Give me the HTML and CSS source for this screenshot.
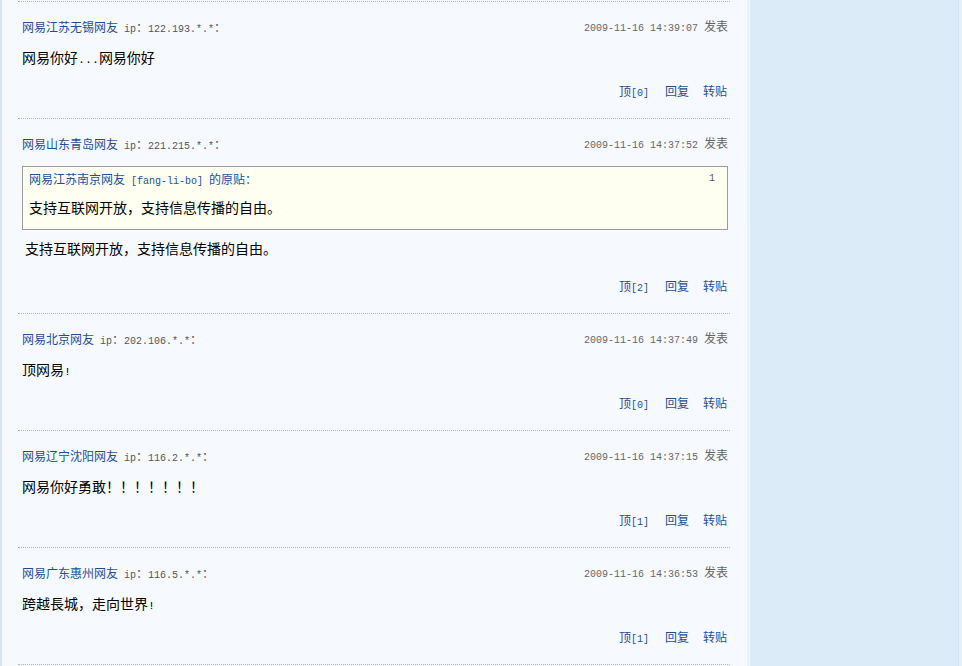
FILE: index.html
```html
<!DOCTYPE html>
<html lang="zh-CN">
<head>
<meta charset="utf-8">
<title>评论</title>
<link rel="stylesheet" href="styles.css">
</head>
<body>
<div class="page">
  <div class="main">
    <div class="comment">
      <div class="head">
        <div class="who"><a class="name">网易江苏无锡网友</a><span class="ip"><span class="mono"> ip</span>：<span class="mono">122.193.*.*</span>：</span></div>
        <div class="time"><span class="mono">2009-11-16 14:39:07 </span>发表</div>
      </div>
      <div class="text">网易你好<span class="mono14">...</span>网易你好</div>
      <div class="acts"><a><span>顶</span><span class="mono">[0]</span></a><a>回复</a><a>转贴</a></div>
    </div>
    <div class="comment">
      <div class="head">
        <div class="who"><a class="name">网易山东青岛网友</a><span class="ip"><span class="mono"> ip</span>：<span class="mono">221.215.*.*</span>：</span></div>
        <div class="time"><span class="mono">2009-11-16 14:37:52 </span>发表</div>
      </div>
      <div class="quote">
        <div class="qhead"><span class="qwho">网易江苏南京网友<span class="mono"> [fang-li-bo] </span>的原贴：</span><span class="qnum mono">1</span></div>
        <div class="qtext">支持互联网开放，支持信息传播的自由。</div>
      </div>
      <div class="text text-after">支持互联网开放，支持信息传播的自由。</div>
      <div class="acts acts-after"><a><span>顶</span><span class="mono">[2]</span></a><a>回复</a><a>转贴</a></div>
    </div>
    <div class="comment">
      <div class="head">
        <div class="who"><a class="name">网易北京网友</a><span class="ip"><span class="mono"> ip</span>：<span class="mono">202.106.*.*</span>：</span></div>
        <div class="time"><span class="mono">2009-11-16 14:37:49 </span>发表</div>
      </div>
      <div class="text">顶网易<span class="mono14">!</span></div>
      <div class="acts"><a><span>顶</span><span class="mono">[0]</span></a><a>回复</a><a>转贴</a></div>
    </div>
    <div class="comment">
      <div class="head">
        <div class="who"><a class="name">网易辽宁沈阳网友</a><span class="ip"><span class="mono"> ip</span>：<span class="mono">116.2.*.*</span>：</span></div>
        <div class="time"><span class="mono">2009-11-16 14:37:15 </span>发表</div>
      </div>
      <div class="text">网易你好勇敢！！！！！！！</div>
      <div class="acts"><a><span>顶</span><span class="mono">[1]</span></a><a>回复</a><a>转贴</a></div>
    </div>
    <div class="comment">
      <div class="head">
        <div class="who"><a class="name">网易广东惠州网友</a><span class="ip"><span class="mono"> ip</span>：<span class="mono">116.5.*.*</span>：</span></div>
        <div class="time"><span class="mono">2009-11-16 14:36:53 </span>发表</div>
      </div>
      <div class="text">跨越長城，走向世界<span class="mono14">!</span></div>
      <div class="acts"><a><span>顶</span><span class="mono">[1]</span></a><a>回复</a><a>转贴</a></div>
    </div>
    <div class="comment comment-last"></div>
  </div>
  <div class="side"></div>
  <div class="edge"></div>
</div>
</body>
</html>
```
FILE: styles.css
```css
html, body {
  margin: 0;
  padding: 0;
  background: #ffffff;
}
body {
  font-family: "Noto Sans CJK SC", "Noto Sans", sans-serif;
  font-size: 12px;
  color: #000;
}
.page {
  display: flex;
  width: 962px;
  height: 666px;
  overflow: hidden;
}
.main {
  flex: 0 0 750px;
  padding: 1px 0 0 16px;
  background: #f6faff;
  border-left: 2px solid #d6e4f2;
  border-right: 3px solid #eaf2fb;
  box-sizing: border-box;
}
.side {
  flex: 0 0 208px;
  background: #dcebf8;
}
.edge {
  flex: 0 0 4px;
  background: #e6f0fa;
  border-left: 1px solid #d2e2f2;
  box-sizing: border-box;
}
.comment {
  width: 712px;
  border-top: 1px dotted #b4b4b4;
  padding: 0 2px 19px 4px;
  box-sizing: border-box;
}
.comment-last {
  height: 10px;
  padding: 0;
}
.mono {
  font-family: "Liberation Mono", "DejaVu Sans Mono", monospace;
  font-size: 10px;
  white-space: pre;
}
.mono14 {
  font-family: "Liberation Mono", "DejaVu Sans Mono", monospace;
  font-size: 11.6px;
}
.head {
  display: flex;
  justify-content: space-between;
  align-items: center;
  padding-top: 17px;
  height: 16px;
  line-height: 16px;
}
.who, .time {
  height: 16px;
  line-height: 16px;
  white-space: nowrap;
}
.time {
  color: #666;
  position: relative;
  top: -1px;
}
a {
  color: #1c4e9e;
  text-decoration: none;
}
.ip {
  color: #555;
  font-size: 12px;
}
.text {
  margin-top: 10px;
  height: 24px;
  line-height: 24px;
  font-size: 14px;
}
.text-after {
  margin-top: 6px;
  padding-left: 3px;
}
.acts {
  margin-top: 14px;
  line-height: 16px;
  height: 16px;
  display: flex;
  justify-content: flex-end;
  gap: 14px;
  padding-right: 1px;
}
.acts a {
  height: 16px;
  white-space: nowrap;
}
.acts a:first-child {
  margin-right: 2px;
}
.acts-after {
  margin-top: 18px;
}
.quote {
  margin-top: 14px;
  border: 1px solid #9c9c9c;
  background: #fefff0;
  padding: 4px 12px 10px 6px;
}
.qhead {
  display: flex;
  justify-content: space-between;
  line-height: 16px;
  height: 16px;
  color: #1c4e9e;
}
.qnum {
  color: #555;
}
.qtext {
  margin-top: 8px;
  height: 24px;
  line-height: 24px;
  font-size: 14px;
}
```
